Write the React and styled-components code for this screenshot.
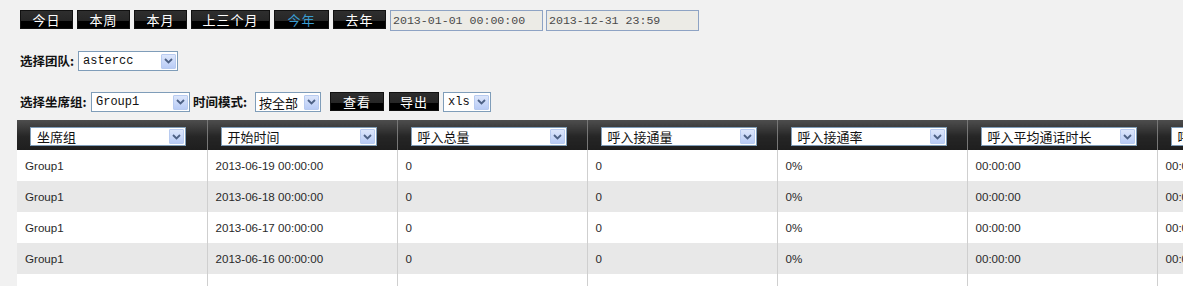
import React from "react";
import styled, { createGlobalStyle } from "styled-components";

const GlobalStyle = createGlobalStyle`
	html, body {
		margin: 0;
		padding: 0;
		background: #f1f1f1;
		font-family: "Liberation Sans", "Noto Sans CJK SC", sans-serif;
		overflow: hidden;
	}
`;

const CJK = `"Noto Sans CJK SC", "Liberation Sans", sans-serif`;
const MONO = `"Liberation Mono", "Noto Sans CJK SC", monospace`;

const Page = styled.div`
	width: 1183px;
	height: 286px;
	overflow: hidden;
	padding: 10px 0 0 20px;
	box-sizing: border-box;
`;

const Bar = styled.div`
	display: flex;
	align-items: flex-start;
	gap: ${(p) => p.gap || 0}px;
	margin-bottom: ${(p) => p.mb || 0}px;
	height: ${(p) => p.h || 21}px;
`;

const BlackButton = styled.button`
	height: 19px;
	min-width: ${(p) => p.w}px;
	width: ${(p) => p.w}px;
	margin: ${(p) => p.m || "0"};
	padding: 0;
	border: 1px solid #111;
	background: linear-gradient(#2e2e2e 0, #262626 58%, #000 60%, #000 100%);
	color: ${(p) => (p.active ? "#3a9ccf" : "#fff")};
	font-family: ${CJK};
	font-size: 13px;
	line-height: 17px;
	letter-spacing: 1px;
	cursor: pointer;
`;

const DateInput = styled.div`
	width: 153px;
	height: 21px;
	box-sizing: border-box;
	border: 1px solid #8ea3c4;
	background: #ecebe6;
	color: #4a4a4a;
	font-family: ${MONO};
	font-size: 11.6px;
	line-height: 19px;
	padding-left: 2px;
	white-space: nowrap;
	margin-left: ${(p) => p.ml || 0}px;
`;

const Label = styled.span`
	display: inline-block;
	width: ${(p) => p.w}px;
	flex: none;
	font-family: ${CJK};
	font-weight: bold;
	font-size: 12.5px;
	color: #111;
	line-height: 20px;
	white-space: nowrap;
`;

const SelectBox = styled.div`
	display: flex;
	align-items: center;
	justify-content: space-between;
	width: ${(p) => p.w}px;
	height: ${(p) => p.h || 20}px;
	flex: none;
	box-sizing: border-box;
	border: 1px solid #7f9db9;
	background: #fff;
	padding: 0 1px 0 ${(p) => p.pl || 4}px;
	font-family: ${(p) => (p.cjk ? CJK : MONO)};
	font-size: ${(p) => (p.cjk ? 13 : 12)}px;
	font-weight: normal;
	color: #111;
	white-space: nowrap;
	overflow: hidden;
	margin: ${(p) => p.m || "0"};
`;

const ArrowBox = styled.span`
	display: flex;
	align-items: center;
	justify-content: center;
	width: 15px;
	height: 15px;
	flex: none;
	box-sizing: border-box;
	border: 1px solid #b8cbf0;
	border-radius: 1px;
	background: linear-gradient(#dce6fb, #b9ccf6);
`;

const Select = ({ value, w, h, cjk, m, pl }) => (
	<SelectBox w={w} h={h} cjk={cjk} m={m} pl={pl}>
		<span>{value}</span>
		<ArrowBox>
			<svg width="9" height="6" viewBox="0 0 9 6">
				<path d="M1 1 L4.5 4.5 L8 1" fill="none" stroke="#4d6185" strokeWidth="1.8" />
			</svg>
		</ArrowBox>
	</SelectBox>
);

const TableWrap = styled.div`
	margin-left: -3px;
	width: 1180px;
	overflow: hidden;
`;

const Table = styled.table`
	border-collapse: collapse;
	table-layout: fixed;
	width: ${7 * 190}px;
`;

const HeadCell = styled.th`
	width: 190px;
	height: 30px;
	padding: 0;
	box-sizing: border-box;
	background: linear-gradient(#4e4e4e, #262626 55%, #1e1e1e);
	border-left: 1px solid #777;
	&:first-child {
		border-left: none;
	}
	text-align: left;
	vertical-align: top;
	font-weight: normal;
`;

const HeadInner = styled.div`
	padding: 7px 0 0 13px;
`;

const Row = styled.tr`
	background: ${(p) => (p.alt ? "#e8e8e8" : "#fff")};
`;

const Cell = styled.td`
	height: 31px;
	padding: 0 0 0 8px;
	box-sizing: border-box;
	border-left: 1px solid #cfcfcf;
	&:first-child {
		border-left: none;
	}
	font-family: "Liberation Sans", sans-serif;
	font-size: 11.6px;
	color: #2a2a2a;
	white-space: nowrap;
	overflow: hidden;
`;

const quick = [
	{ t: "今日", w: 53 },
	{ t: "本周", w: 53 },
	{ t: "本月", w: 53 },
	{ t: "上三个月", w: 79 },
	{ t: "今年", w: 55, active: true },
	{ t: "去年", w: 53 }
];

const headers = ["坐席组", "开始时间", "呼入总量", "呼入接通量", "呼入接通率", "呼入平均通话时长", "呼入"];

const dates = ["2013-06-19", "2013-06-18", "2013-06-17", "2013-06-16", "2013-06-15"];

export default function App() {
	return (
		<>
			<GlobalStyle />
			<Page>
				<Bar gap={4} mb={20}>
					{quick.map((b) => (
						<BlackButton key={b.t} w={b.w} active={b.active}>
							{b.t}
						</BlackButton>
					))}
					<DateInput>2013-01-01 00:00:00</DateInput>
					<DateInput ml={-1}>2013-12-31 23:59</DateInput>
				</Bar>
				<Bar mb={21} h={20}>
					<Label w={58}>选择团队:</Label>
					<Select value="astercc" w={100} />
				</Bar>
				<Bar mb={7} h={21}>
					<Label w={71}>选择坐席组:</Label>
					<Select value="Group1" w={99} m="0 3px 0 0" />
					<Label w={62}>时间模式:</Label>
					<Select value="按全部" w={66} cjk pl={3} />
					<BlackButton w={54} m="0 0 0 9px">查看</BlackButton>
					<BlackButton w={50} m="0 0 0 5px">导出</BlackButton>
					<Select value="xls" w={48} m="0 0 0 4px" />
				</Bar>
				<TableWrap>
					<Table>
						<thead>
							<tr>
								{headers.map((h) => (
									<HeadCell key={h}>
										<HeadInner>
											<Select value={h} w={156} h={19} cjk pl={6} />
										</HeadInner>
									</HeadCell>
								))}
							</tr>
						</thead>
						<tbody>
							{dates.map((d, i) => (
								<Row key={d} alt={i % 2 === 1}>
									<Cell>Group1</Cell>
									<Cell>{d} 00:00:00</Cell>
									<Cell>0</Cell>
									<Cell>0</Cell>
									<Cell>0%</Cell>
									<Cell>00:00:00</Cell>
									<Cell>00:00:00</Cell>
								</Row>
							))}
						</tbody>
					</Table>
				</TableWrap>
			</Page>
		</>
	);
}
